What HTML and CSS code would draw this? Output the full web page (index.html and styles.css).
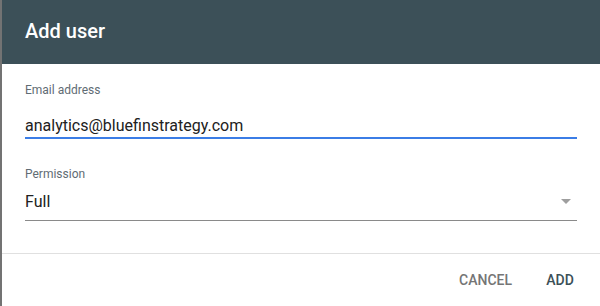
FILE: index.html
```html
<!DOCTYPE html>
<html lang="en">

<head>
    <meta charset="UTF-8">
    <meta name="viewport" content="width=device-width, initial-scale=1.0">
    <title>Add user</title>
    <link rel="stylesheet" href="styles.css">
</head>

<body>
    <div class="dialog">
        <header class="dialog-head">
            <h1>Add user</h1>
        </header>
        <div class="dialog-body">
            <div class="field">
                <label class="field-label">Email address</label>
                <div class="field-value email">analytics@bluefinstrategy.com</div>
            </div>
            <div class="field">
                <label class="field-label">Permission</label>
                <div class="field-value select">
                    Full
                    <span class="arrow"></span>
                </div>
            </div>
        </div>
        <footer class="dialog-foot">
            <button class="btn cancel">Cancel</button>
            <button class="btn add">Add</button>
        </footer>
    </div>
</body>

</html>
```

FILE: styles.css
```css
* {
    margin: 0;
    padding: 0;
    box-sizing: border-box;
}

body {
    background-color: #fff;
    font-family: Roboto, "Liberation Sans", sans-serif;
    width: 600px;
    height: 306px;
    overflow: hidden;
}

.dialog {
    height: 306px;
    border-left: 2px solid #737373;
    background-color: #fff;
}

.dialog-head {
    height: 64px;
    background-color: #3c5058;
    padding: 0 23px;
    display: flex;
    align-items: center;
}

.dialog-head h1 {
    color: #fff;
    font-size: 20px;
    font-weight: 500;
    line-height: 24px;
    margin-top: -2px;
}

.dialog-body {
    padding: 18px 23px 32px 23px;
}

.field + .field {
    margin-top: 27px;
}

.field-label {
    display: block;
    font-size: 12px;
    line-height: 16px;
    color: #5f6c74;
}

.field-value {
    position: relative;
    font-size: 16px;
    line-height: 20px;
    color: #212121;
}

.email {
    margin-top: 18px;
    padding-bottom: 1px;
    border-bottom: 2px solid #3b7de6;
}

.select {
    margin-top: 10px;
    padding-bottom: 8px;
    border-bottom: 1px solid #8a8a8a;
}

.arrow {
    position: absolute;
    right: 6px;
    top: 7px;
    width: 0;
    height: 0;
    border-left: 5px solid transparent;
    border-right: 5px solid transparent;
    border-top: 5px solid #9e9e9e;
}

.dialog-foot {
    border-top: 1px solid #e0e0e0;
    padding: 8px;
    display: flex;
    justify-content: flex-end;
    gap: 8px;
}

.btn {
    min-width: 64px;
    height: 36px;
    padding: 0 8px;
    border: none;
    outline: none;
    background: none;
    font-family: Roboto, "Liberation Sans", sans-serif;
    font-size: 14px;
    font-weight: 500;
    text-transform: uppercase;
    cursor: pointer;
}

.cancel {
    color: #757575;
}

.add {
    color: #3c5058;
}
```
